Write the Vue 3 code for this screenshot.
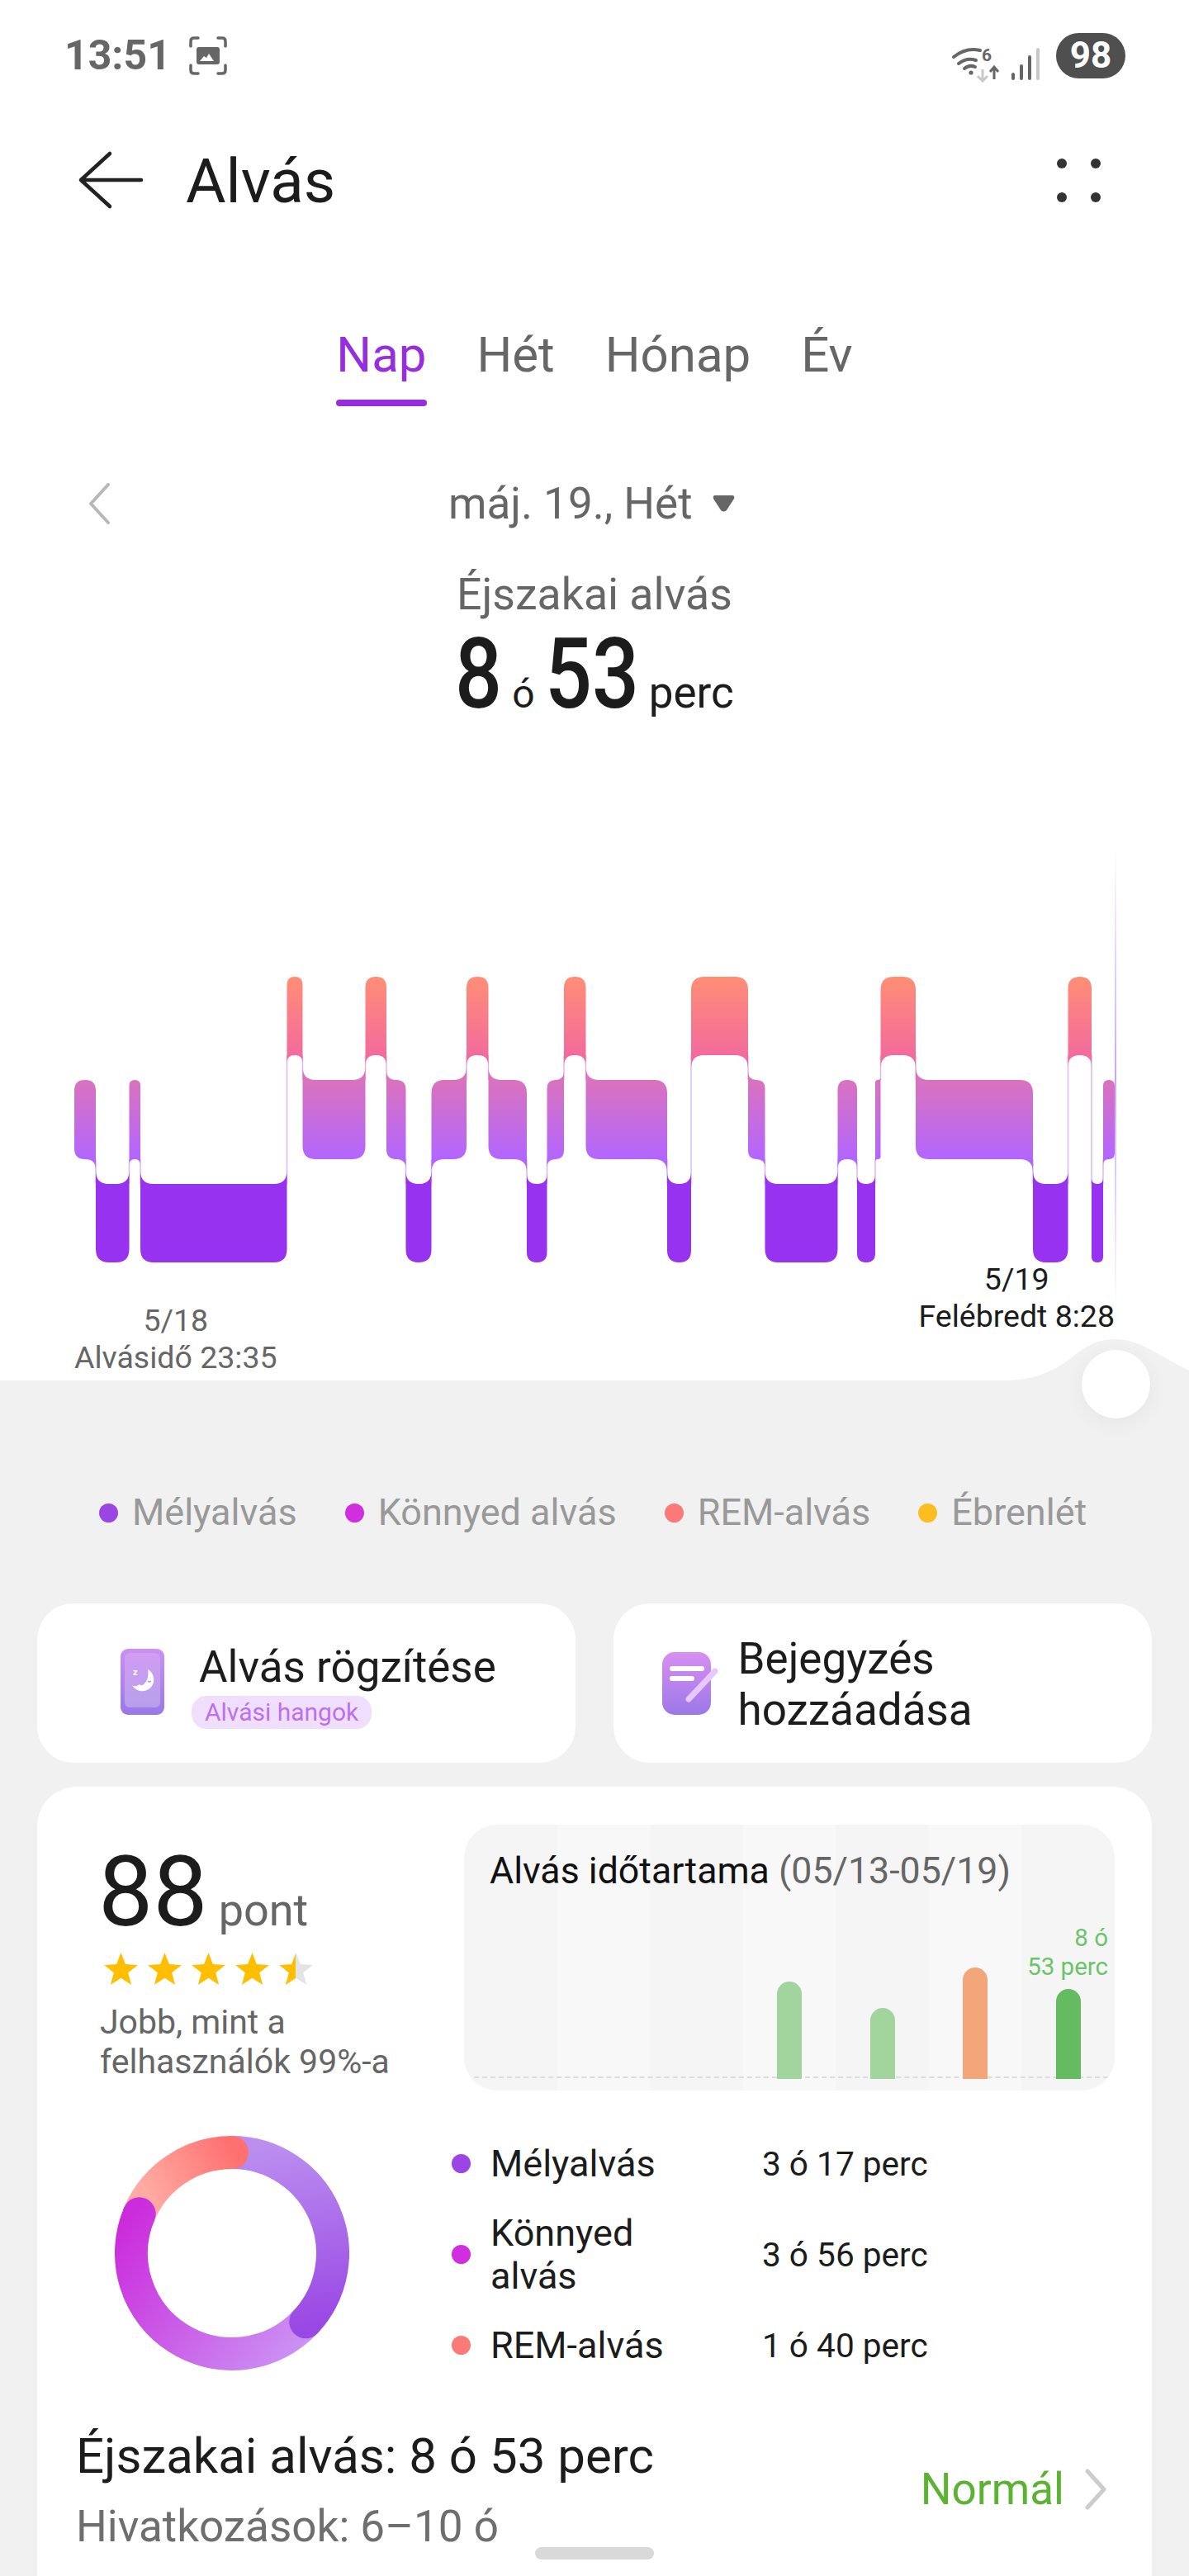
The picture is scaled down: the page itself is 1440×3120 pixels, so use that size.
<template>
  <div class="page">
    <section class="top">
      <div class="status">
        <span class="clock">13:51</span>
        <svg class="shot" width="46" height="47" viewBox="0 0 46 47" fill="none">
          <path d="M2 12V6q0-4 4-4h5M35 2h5q4 0 4 4v6M44 35v6q0 4-4 4h-5M11 45H6q-4 0-4-4v-6" stroke="#666" stroke-width="3.5" stroke-linecap="round" />
          <rect x="9" y="13" width="28" height="21" rx="3" fill="#666" />
          <path d="M13 30l5-6 3 2 3-5 6 9z" fill="#fff" />
        </svg>
        <div class="status-right">
          <svg width="130" height="60" viewBox="0 0 130 60" fill="none">
            <path d="M15 29Q30 17 47 21M21 37Q31 29 42 33M28 43Q34 38 41 41" stroke="#666" stroke-width="4" stroke-linecap="round" />
            <circle cx="36" cy="48" r="2.6" fill="#666" />
            <text x="49" y="34" class="wifi6">6</text>
            <path d="M50 44v14M44 52l6 6 6-6" stroke="#c8c8c8" stroke-width="3" />
            <path d="M64 56V41M59 47l5-6 5 6" stroke="#666" stroke-width="3" />
            <path d="M87 50v5M97 40v15M107 29v26" stroke="#666" stroke-width="4" stroke-linecap="round" />
            <path d="M117 20v35" stroke="#c8c8c8" stroke-width="4" stroke-linecap="round" />
          </svg>
          <span class="battery">98</span>
        </div>
      </div>

      <div class="header">
        <svg class="back" width="80" height="72" viewBox="0 0 80 72" fill="none">
          <path d="M39 4L4 36l35 32M4 36h73" stroke="#222" stroke-width="4.5" stroke-linecap="round" stroke-linejoin="round" />
        </svg>
        <span class="title">Alvás</span>
        <span class="more"><i v-for="n in 4" :key="n"></i></span>
      </div>

      <div class="tabs">
        <div v-for="(t, i) in tabs" :key="t" class="tab" :class="{ on: i === 0 }">
          <span>{{ t }}</span>
          <b></b>
        </div>
      </div>

      <div class="date">
        <svg width="27" height="50" viewBox="0 0 27 50" fill="none">
          <path d="M25 2L4 25l21 23" stroke="#b8b8b8" stroke-width="4" stroke-linecap="round" stroke-linejoin="round" />
        </svg>
        <span class="date-text">máj. 19., Hét</span>
        <svg width="27" height="20" viewBox="0 0 27 20">
          <path d="M3 0h21q3 0 2 4l-9 14q-3.500 3-7 0L1 4q-1-4 2-4z" fill="#666" />
        </svg>
      </div>

      <div class="sleep-label">Éjszakai alvás</div>
      <div class="sleep-total">
        <span class="num one">8</span>
        <span class="unit-o">ó</span>
        <span class="num two">53</span>
        <span class="unit-p">perc</span>
      </div>

      <svg class="hypno" width="1440" height="503" viewBox="0 1027 1440 503">
        <defs>
          <linearGradient id="g-rem" gradientUnits="userSpaceOnUse" x1="0" y1="1183" x2="0" y2="1278">
            <stop offset="0" stop-color="#ff8e75" />
            <stop offset="1" stop-color="#f36b9d" />
          </linearGradient>
          <linearGradient id="g-light" gradientUnits="userSpaceOnUse" x1="0" y1="1308" x2="0" y2="1404">
            <stop offset="0" stop-color="#da72bd" />
            <stop offset="1" stop-color="#b266ff" />
          </linearGradient>
          <linearGradient id="g-now" gradientUnits="userSpaceOnUse" x1="0" y1="1027" x2="0" y2="1585">
            <stop offset="0" stop-color="#c9a6f7" stop-opacity="0" />
            <stop offset="0.5" stop-color="#c9a6f7" />
            <stop offset="1" stop-color="#c9a6f7" stop-opacity="0" />
          </linearGradient>
        </defs>
        <path v-for="(l, i) in links" :key="'l' + i" :d="l" stroke="#dcb8f4" stroke-width="1.5" fill="none" />
        <path v-for="(s, i) in shapes" :key="i" :d="s.d" :fill="s.fill" />
        <rect x="1350" y="1027" width="2" height="558" fill="url(#g-now)" />
      </svg>

      <div class="marks">
        <div class="mark start">5/18<br />Alvásidő 23:35</div>
        <div class="mark end">5/19<br />Felébredt 8:28</div>
      </div>

      <svg class="hump" width="240" height="62" viewBox="0 0 240 62">
        <path d="M17 62C50 62 72 52 90 40C105 30 120 12 150 12C180 12 200 30 240 50V62z" fill="#f1f1f1" />
      </svg>
      <div class="knob"></div>
    </section>

    <div class="legend">
      <div v-for="l in legend" :key="l.name" class="legend-item">
        <i :style="{ background: l.color }"></i>{{ l.name }}
      </div>
    </div>

    <div class="quick">
      <div class="quick-card first">
        <svg class="phone" width="53" height="80" viewBox="0 0 53 80">
          <defs>
            <linearGradient id="ph-a" x1="0" y1="0" x2="0" y2="1">
              <stop offset="0" stop-color="#cb90f2" />
              <stop offset="1" stop-color="#9a78e6" />
            </linearGradient>
            <linearGradient id="ph-b" x1="0" y1="0" x2="0" y2="1">
              <stop offset="0" stop-color="#d29cf3" />
              <stop offset="1" stop-color="#b5a0ec" />
            </linearGradient>
          </defs>
          <rect width="53" height="80" rx="9" fill="url(#ph-a)" />
          <rect x="5" y="5" width="43" height="66" rx="6" fill="url(#ph-b)" />
          <path d="M33 25A14 14 0 1 1 14 44Q18 47 23 43Q26 46 29 42Q35 36 33 25z" fill="#fff" />
          <path d="M33 39q2 2 4 0" stroke="#c58fee" stroke-width="1.5" fill="none" />
          <text x="15" y="32" class="zed">z</text>
        </svg>
        <div class="quick-text">
          <div class="quick-title">Alvás rögzítése</div>
          <div class="badge">Alvási hangok</div>
        </div>
      </div>
      <div class="quick-card second">
        <svg width="68" height="76" viewBox="0 0 68 76">
          <defs>
            <linearGradient id="nt-a" x1="0" y1="0" x2="0" y2="1">
              <stop offset="0" stop-color="#d88ff1" />
              <stop offset="1" stop-color="#9b78e8" />
            </linearGradient>
          </defs>
          <rect width="59" height="76" rx="15" fill="url(#nt-a)" />
          <path d="M12 20h36M12 32h24" stroke="#fff" stroke-width="6" stroke-linecap="round" />
          <path d="M32 57L64 23" stroke="#e6c8fa" stroke-width="7" stroke-linecap="round" />
        </svg>
        <div class="note-title">Bejegyzés<br />hozzáadása</div>
      </div>
    </div>

    <div class="report">
      <div class="report-top">
        <div class="score">
          <div class="score-line"><span class="score-num">88</span><span class="score-unit">pont</span></div>
          <svg class="stars" width="256" height="39" viewBox="0 0 256 39">
            <defs>
              <linearGradient id="half" x1="0" y1="0" x2="1" y2="0">
                <stop offset="0.5" stop-color="#ffbe00" />
                <stop offset="0.5" stop-color="#e4e4e4" />
              </linearGradient>
            </defs>
            <path v-for="n in 5" :key="n" :d="starPath((n - 1) * 53)" :fill="n === 5 ? 'url(#half)' : '#ffbe00'" />
          </svg>
          <div class="rank">Jobb, mint a<br />felhasználók 99%-a</div>
        </div>

        <div class="week">
          <div class="week-cols">
            <div v-for="(c, i) in week" :key="i" class="week-col">
              <div v-if="c.label" class="week-label">8 ó<br />53 perc</div>
              <div v-if="c.h" class="week-bar" :style="{ height: c.h + 'px', background: c.color }"></div>
            </div>
          </div>
          <div class="week-base"></div>
          <div class="week-title">Alvás időtartama <span>(05/13-05/19)</span></div>
        </div>
      </div>

      <div class="report-mid">
        <svg class="ring" width="284" height="284" viewBox="0 0 284 284" fill="none">
          <defs>
            <linearGradient id="r-deep" gradientUnits="userSpaceOnUse" x1="170" y1="15" x2="205" y2="235">
              <stop offset="0" stop-color="#bb8eef" />
              <stop offset="1" stop-color="#9a48e4" />
            </linearGradient>
            <linearGradient id="r-light" gradientUnits="userSpaceOnUse" x1="240" y1="240" x2="30" y2="80">
              <stop offset="0" stop-color="#cb92f4" />
              <stop offset="1" stop-color="#cb2cdc" />
            </linearGradient>
            <linearGradient id="r-rem" gradientUnits="userSpaceOnUse" x1="40" y1="70" x2="145" y2="20">
              <stop offset="0" stop-color="#ffaaa2" />
              <stop offset="1" stop-color="#ff7070" />
            </linearGradient>
          </defs>
          <path v-for="a in arcs" :key="a.id" :d="a.d" :stroke="'url(#' + a.id + ')'" stroke-width="40" />
          <circle v-for="a in arcs" :key="a.id + 'c'" :cx="a.cx" :cy="a.cy" r="20" :fill="'url(#' + a.id + ')'" />
        </svg>
        <div class="stages">
          <div v-for="s in stages" :key="s.value" class="stage">
            <i :style="{ background: s.color }"></i>
            <div class="stage-name">{{ s.name }}</div>
            <div class="stage-value">{{ s.value }}</div>
          </div>
        </div>
      </div>

      <div class="report-foot">
        <div>
          <div class="foot-title">Éjszakai alvás: 8 ó 53 perc</div>
          <div class="foot-ref">Hivatkozások: 6–10 ó</div>
        </div>
        <div class="foot-state">
          <span>Normál</span>
          <svg width="26" height="50" viewBox="0 0 26 50" fill="none">
            <path d="M3 3l20 22L3 47" stroke="#ccc" stroke-width="5" stroke-linecap="round" stroke-linejoin="round" />
          </svg>
        </div>
      </div>
    </div>

    <div class="home-bar"></div>
  </div>
</template>

<script setup>
const tabs = ['Nap', 'Hét', 'Hónap', 'Év']

const legend = [
  { name: 'Mélyalvás', color: '#9b45e4' },
  { name: 'Könnyed alvás', color: '#d02fe0' },
  { name: 'REM-alvás', color: '#fb7a78' },
  { name: 'Ébrenlét', color: '#fcbd20' }
]

const stages = [
  { name: 'Mélyalvás', value: '3 ó 17 perc', color: '#9b45e4' },
  { name: 'Könnyed alvás', value: '3 ó 56 perc', color: '#d02fe0' },
  { name: 'REM-alvás', value: '1 ó 40 perc', color: '#fb7a78' }
]

const week = [
  {}, {}, {},
  { h: 118, color: '#a2d59e' },
  { h: 86, color: '#a2d59e' },
  { h: 135, color: '#f2a679' },
  { h: 109, color: '#65bc60', label: true }
]

// sleep stages, [end x, level]
const bands = {
  rem: { t: 1183, b: 1278, rank: 0, fill: 'url(#g-rem)' },
  light: { t: 1308, b: 1404, rank: 1, fill: 'url(#g-light)' },
  deep: { t: 1434, b: 1529, rank: 2, fill: '#9632f0' }
}
const stops = [
  [116, 'light'], [156.5, 'deep'], [170, 'light'], [347.5, 'deep'], [366.5, 'rem'],
  [442.5, 'light'], [468, 'rem'], [491.5, 'light'], [522.5, 'deep'], [565, 'light'],
  [591.5, 'rem'], [638, 'light'], [662.5, 'deep'], [683, 'light'], [709.5, 'rem'],
  [808, 'light'], [837, 'deep'], [906, 'rem'], [926.5, 'light'], [1014.5, 'deep'],
  [1038, 'light'], [1060, 'deep'], [1066.5, 'light'], [1109, 'rem'], [1251, 'light'],
  [1293.5, 'deep'], [1322, 'rem'], [1336, 'deep'], [1350, 'light']
]

const segs = stops.map(([x1, level], i) => ({
  x0: i ? stops[i - 1][0] : 90,
  x1,
  band: bands[level]
}))

function segPath(s, prev, next) {
  const { x0, x1, band } = s
  const { t, b, rank } = band
  const r = Math.min(16, (x1 - x0) / 2)
  const upL = prev && prev.band.rank < rank
  const upR = next && next.band.rank < rank
  const downL = prev && prev.band.rank > rank
  const downR = next && next.band.rank > rank
  return [
    `M${x0} ${upL ? t - r : t + r}Q${x0} ${t} ${x0 + r} ${t}`,
    `L${x1 - r} ${t}Q${x1} ${t} ${x1} ${upR ? t - r : t + r}`,
    `L${x1} ${downR ? b + r : b - r}Q${x1} ${b} ${x1 - r} ${b}`,
    `L${x0 + r} ${b}Q${x0} ${b} ${x0} ${downL ? b + r : b - r}Z`
  ].join('')
}

const shapes = segs.map((s, i) => ({
  d: segPath(s, segs[i - 1], segs[i + 1]),
  fill: s.band.fill
}))

// thin lines that join one level to the next
const links = segs.slice(1).map((s, i) => {
  const p = segs[i]
  const hi = p.band.rank < s.band.rank ? p.band : s.band
  const lo = p.band.rank < s.band.rank ? s.band : p.band
  return `M${s.x0} ${hi.b}V${lo.t}`
})

function starPath(dx) {
  const pts = []
  for (let i = 0; i < 10; i++) {
    const a = (Math.PI / 5) * i - Math.PI / 2
    const r = i % 2 ? 9.2 : 21.5
    pts.push(`${(20.5 + dx + r * Math.cos(a)).toFixed(1)} ${(21.5 + r * Math.sin(a)).toFixed(1)}`)
  }
  return 'M' + pts.join('L') + 'Z'
}

function pt(deg) {
  const a = ((deg - 90) * Math.PI) / 180
  return [142 + 122 * Math.cos(a), 142 + 122 * Math.sin(a)]
}

function arc(id, from, to) {
  const [x0, y0] = pt(from)
  const [x1, y1] = pt(to)
  const big = to - from > 180 ? 1 : 0
  return { id, d: `M${x0} ${y0}A122 122 0 ${big} 1 ${x1} ${y1}`, cx: x1, cy: y1 }
}

const arcs = [
  arc('r-deep', 0, 133),
  arc('r-light', 133, 293),
  arc('r-rem', 293, 360)
]
</script>

<style>
html, body {
  margin: 0;
  background: #f1f1f1;
}
</style>

<style scoped>
.page {
  position: relative;
  width: 1440px;
  height: 3120px;
  overflow: hidden;
  background: #f1f1f1;
  color: #1c1c1c;
  font-family: Roboto, "Noto Sans", sans-serif;
}
.top {
  position: relative;
  height: 1672px;
  background: #fff;
}
.status {
  display: flex;
  align-items: center;
  height: 134px;
  padding: 0 77px 0 78px;
}
.clock {
  font-size: 50px;
  font-weight: 700;
  color: #666;
}
.shot {
  margin-left: 22px;
}
.status-right {
  display: flex;
  align-items: center;
  margin-left: auto;
}
.status-right svg {
  margin-top: 6px;
}
.wifi6 {
  font: 700 21px Roboto, sans-serif;
  fill: #666;
}
.battery {
  width: 84px;
  height: 55px;
  margin-left: 9px;
  border-radius: 28px;
  background: #4f4f4f;
  color: #fff;
  font-size: 44px;
  font-weight: 700;
  line-height: 55px;
  text-align: center;
}
.header {
  display: flex;
  align-items: center;
  height: 168px;
  padding: 0 107px 0 94px;
}
.title {
  margin: 3px 0 0 51px;
  font-size: 74.5px;
  color: #1c1c1c;
}
.more {
  display: grid;
  grid-template-columns: 12px 12px;
  gap: 29px;
  margin-left: auto;
}
.more i {
  width: 12px;
  height: 12px;
  border-radius: 50%;
  background: #333;
}
.tabs {
  display: flex;
  justify-content: center;
  gap: 61px;
  margin-top: 92px;
}
.tab {
  display: flex;
  flex-direction: column;
  font-size: 60px;
  line-height: 72px;
  color: #666;
}
.tab b {
  height: 8px;
  margin-top: 18px;
  border-radius: 4px;
}
.tab.on {
  color: #962ddf;
}
.tab.on b {
  background: #962ddf;
}
.date {
  display: flex;
  align-items: center;
  height: 60px;
  margin-top: 88px;
  padding-left: 106px;
}
.date-text {
  margin: 0 24px 0 410px;
  font-size: 53px;
  line-height: 60px;
  color: #666;
}
.sleep-label {
  margin-top: 50px;
  font-size: 53.6px;
  line-height: 60px;
  color: #666;
  text-align: center;
}
.sleep-total {
  display: flex;
  justify-content: center;
  align-items: baseline;
  gap: 12px;
  margin-top: 7px;
  line-height: 120px;
  height: 120px;
}
.num {
  display: inline-block;
  font-size: 118px;
  font-weight: 500;
  transform: scaleX(0.85);
}
.num.one {
  margin: 0 -5px;
}
.num.two {
  margin: 0 -10px;
}
.unit-o {
  font-size: 48px;
}
.unit-p {
  font-size: 53px;
}
.hypno {
  display: block;
  margin-top: 150px;
  overflow: visible;
}
.marks {
  display: flex;
  justify-content: space-between;
  align-items: flex-start;
  margin-top: -3px;
  padding: 0 90px 0 90px;
}
.mark {
  font-size: 37.5px;
  line-height: 45px;
  text-align: center;
}
.mark.start {
  margin-top: 50px;
  color: #666;
}
.hump {
  position: absolute;
  left: 1200px;
  top: 1610px;
}
.knob {
  position: absolute;
  left: 1310px;
  top: 1635px;
  width: 83px;
  height: 83px;
  border-radius: 50%;
  background: #fff;
  box-shadow: 0 6px 24px rgba(0, 0, 0, 0.05);
}
.legend {
  display: flex;
  gap: 58px;
  margin-top: 134px;
  margin-bottom: -2px;
  padding-left: 120px;
  font-size: 45px;
  line-height: 52px;
  color: #999;
}
.legend-item {
  display: flex;
  align-items: center;
}
.legend-item i {
  width: 23px;
  height: 23px;
  margin-right: 17px;
  border-radius: 50%;
}
.quick {
  display: flex;
  gap: 46px;
  margin-top: 86px;
  padding: 0 45px;
}
.quick-card {
  display: flex;
  align-items: center;
  height: 193px;
  border-radius: 44px;
  background: #fff;
}
.quick-card.first {
  width: 652px;
  padding-left: 101px;
  box-sizing: border-box;
}
.quick-card.second {
  width: 653px;
  padding-left: 59px;
  box-sizing: border-box;
}
.phone {
  margin-top: -3px;
}
.zed {
  font: 700 11px Roboto, sans-serif;
  fill: #fff;
}
.quick-text {
  margin: 6px 0 0 42px;
}
.quick-title {
  font-size: 53px;
  line-height: 60px;
}
.badge {
  width: fit-content;
  height: 40px;
  margin: 5px 0 0 -9px;
  padding: 0 16px;
  border-radius: 18px;
  background: #f0dffc;
  color: #bd70ee;
  font-size: 30px;
  line-height: 40px;
}
.note-title {
  margin: 3px 0 0 24px;
  font-size: 53px;
  line-height: 62px;
}
.report {
  margin: 29px 45px 0;
  height: 1100px;
  border-radius: 48px;
  background: #fff;
}
.report-top {
  display: flex;
  justify-content: space-between;
  padding: 46px 45px 0 76px;
}
.score {
  padding-top: 32px;
}
.score-line {
  display: flex;
  align-items: baseline;
  height: 100px;
  line-height: 100px;
  margin-left: -2px;
}
.score-num {
  font-size: 118px;
}
.score-unit {
  margin-left: 13px;
  font-size: 54px;
  color: #666;
}
.stars {
  display: block;
  margin: 23px 0 0 5px;
}
.rank {
  margin-top: 21px;
  font-size: 41px;
  line-height: 48px;
  color: #666;
}
.week {
  position: relative;
  width: 788px;
  height: 322px;
  border-radius: 40px;
  overflow: hidden;
}
.week-cols {
  display: grid;
  grid-template-columns: repeat(7, 1fr);
  height: 100%;
}
.week-col {
  display: flex;
  flex-direction: column;
  justify-content: flex-end;
  align-items: center;
  padding-bottom: 14px;
  background: #f5f5f5;
}
.week-col:nth-child(even) {
  background: #f8f8f8;
}
.week-bar {
  position: relative;
  z-index: 2;
  width: 30px;
  border-radius: 15px 15px 0 0;
}
.week-label {
  align-self: flex-end;
  margin: 0 8px 9px 0;
  font-size: 29.5px;
  line-height: 35px;
  color: #6cc46a;
  text-align: right;
  white-space: nowrap;
}
.week-base {
  position: absolute;
  z-index: 1;
  left: 12px;
  right: 8px;
  bottom: 15px;
  border-top: 2px dashed #dcdcdc;
}
.week-title {
  position: absolute;
  z-index: 3;
  left: 31px;
  top: 30px;
  font-size: 44.7px;
  line-height: 52px;
  color: #111;
  white-space: nowrap;
}
.week-title span {
  color: #666;
}
.report-mid {
  display: flex;
  align-items: center;
  margin-top: 55px;
  padding-left: 94px;
}
.stages {
  display: flex;
  flex-direction: column;
  gap: 32px;
  margin: 3px 0 0 124px;
}
.stage {
  display: flex;
  align-items: center;
}
.stage i {
  flex: none;
  width: 23px;
  height: 23px;
  margin-right: 24px;
  border-radius: 50%;
}
.stage-name {
  width: 250px;
  margin-right: 79px;
  font-size: 45px;
  line-height: 52px;
}
.stage-value {
  font-size: 40.6px;
}
.report-foot {
  display: flex;
  justify-content: space-between;
  align-items: center;
  margin-top: 70px;
  padding: 0 55px 0 47px;
}
.foot-title {
  font-size: 60px;
  line-height: 68px;
}
.foot-ref {
  margin-top: 21px;
  font-size: 53px;
  line-height: 60px;
  color: #6e6e6e;
}
.foot-state {
  display: flex;
  align-items: center;
  gap: 25px;
  margin-top: -1px;
  font-size: 53px;
  color: #5cb233;
}
.home-bar {
  position: absolute;
  left: 648px;
  top: 3085px;
  width: 144px;
  height: 15px;
  border-radius: 8px;
  background: #d9d9d9;
}
</style>
